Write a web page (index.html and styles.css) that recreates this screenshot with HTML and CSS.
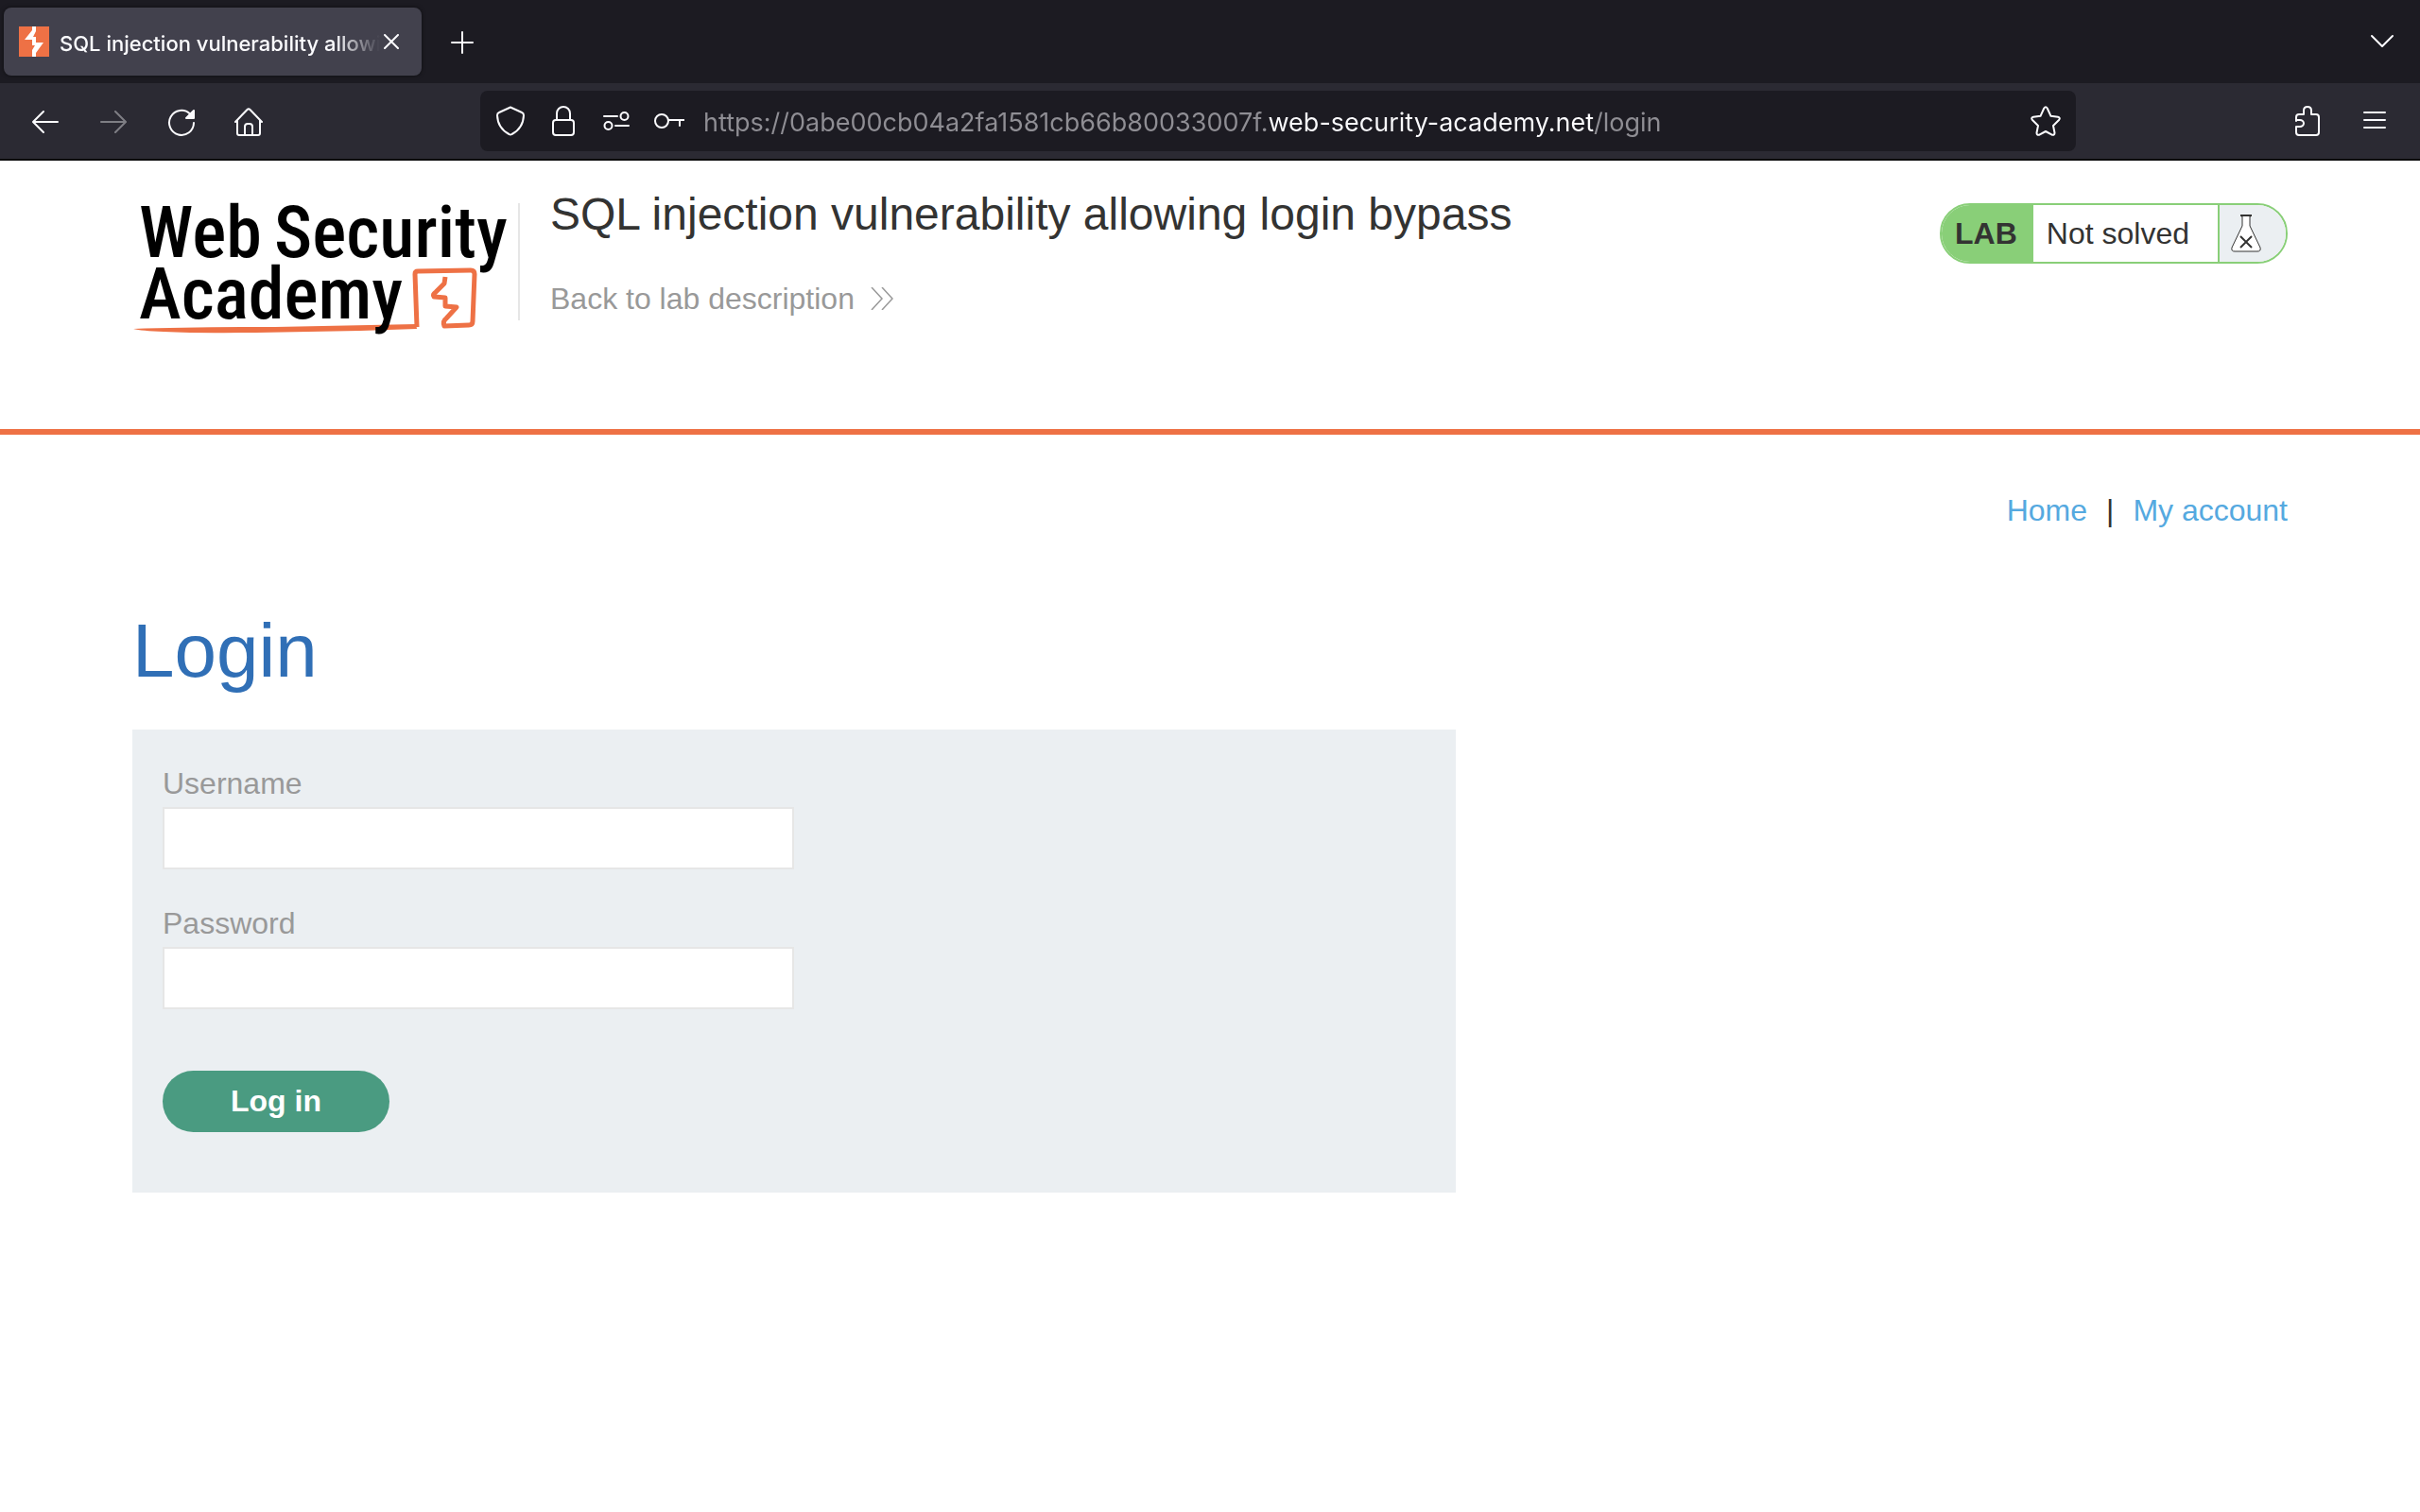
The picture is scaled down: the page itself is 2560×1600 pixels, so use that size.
FILE: index.html
```html
<!DOCTYPE html>
<html lang="en">
<head>
<meta charset="utf-8">
<meta name="viewport" content="width=device-width, initial-scale=1">
<title>SQL injection vulnerability allowing login bypass</title>
<link rel="stylesheet" href="styles.css">
</head>
<body>
<div class="browser">
  <div class="tab-strip">
    <div class="tab">
      <svg class="favicon" viewBox="0 0 32 32" aria-hidden="true"><path fill="#ee7145" d="M0 0h32v32H0z"/><path fill="#fff" d="M14 0h4v5l-3 6h3v6h8l-8 11v4h-4v-7l3-5h-3v-6H6L14 4z"/></svg>
      <span class="tab-title">SQL injection vulnerability allowing login bypass</span>
      <button class="tab-close" type="button" aria-label="Close tab"><svg class="icon-small" viewBox="0 0 16 16"><path d="M1 1l14 14M15 1L1 15"/></svg></button>
    </div>
    <button class="tool" type="button" aria-label="New tab"><svg class="icon" viewBox="0 0 32 32"><path d="M16 6v22M5 17h22"/></svg></button>
    <button class="tool tab-list" type="button" aria-label="List all tabs"><svg class="icon" viewBox="0 0 32 32"><path d="M5 10l11 11 11-11"/></svg></button>
  </div>
  <div class="toolbar">
    <div class="tools">
      <button class="tool" type="button" aria-label="Back"><svg class="icon" viewBox="0 0 32 32"><path d="M29 17H4M14 6L3 17l11 11"/></svg></button>
      <button class="tool" type="button" aria-label="Forward" disabled><svg class="icon" viewBox="0 0 32 32"><path d="M3 17h25M18 6l11 11-11 11"/></svg></button>
      <button class="tool" type="button" aria-label="Reload"><svg class="icon" viewBox="0 0 32 32"><path d="M25 8.500a13 13 0 1 0 4 9.500"/><path class="solid" d="M29 5v8h-8z"/></svg></button>
      <button class="tool" type="button" aria-label="Home"><svg class="icon" viewBox="0 0 32 32"><path d="M1 17L13.500 4q1.500-1.500 3 0L29 17M3 15v14q0 2 2 2h20q2 0 2-2V15M11 31v-9q0-3 3-3h2q3 0 3 3v9"/></svg></button>
    </div>
    <div class="address">
      <svg class="icon" viewBox="0 0 32 32" aria-hidden="true"><path d="M16 1.500L28 7q2 .800 2 3c-.300 9-5 16-12.500 20q-1.500.900-3 0C7 26 2.300 19 2 10q0-2.200 2-3z"/></svg>
      <svg class="icon" viewBox="0 0 32 32" aria-hidden="true"><rect x="5" y="15" width="22" height="16" rx="3"/><path d="M9 15V8a7 7 0 0 1 14 0v7"/></svg>
      <svg class="icon" viewBox="0 0 32 32" aria-hidden="true"><path d="M3 11h14M15 21h14"/><circle cx="24.500" cy="11" r="4"/><circle cx="7.500" cy="21" r="4"/></svg>
      <svg class="icon" viewBox="0 0 32 32" aria-hidden="true"><circle cx="8" cy="16" r="7"/><path d="M15 15h17M27 15v6"/></svg>
      <input class="address-input" type="text" aria-label="Address" value="https://0abe00cb04a2fa1581cb66b80033007f.web-security-academy.net/login">
      <button class="bookmark" type="button" aria-label="Bookmark this page"><svg class="icon" viewBox="0 0 32 32"><path d="M14.300 2.500q1.700-2.500 3.400 0l3.800 8.300 7.500 1q3 .800 1 3.200l-6 6 1.500 7.500q0 3-2.800 2.200L16 27l-6.700 3.700q-2.800.800-2.800-2.200L8 21l-6-6q-2-2.400 1-3.200l7.500-1z"/></svg></button>
    </div>
    <div class="tools">
      <button class="tool" type="button" aria-label="Extensions"><svg class="icon" viewBox="0 0 32 32"><path d="M5 16v-4q0-3 3-3h5V5q0-4 4-4t4 4v4h5q3 0 3 3v16q0 3-3 3H8q-3 0-3-3v-6h4a4 3.500 0 0 0 0-7H5"/></svg></button>
      <button class="tool" type="button" aria-label="Menu"><svg class="icon" viewBox="0 0 32 32"><path d="M5 7h22M5 15h22M5 23h22"/></svg></button>
    </div>
  </div>
</div>

<header class="lab-header">
  <a class="logo" href="#" aria-label="Web Security Academy">
    <svg class="logo-art" viewBox="0 0 400 144">
      <path fill="none" stroke="#ee7145" stroke-width="5" stroke-linejoin="round" d="M301 132l-2-56q0-3 3-3l56-1q4 0 4 4l-2 50q0 4-4 4l-26 1q-2-5 2-8l11-12-12-1v-9l-12-1q-2-2 2-5l9-9 1-7"/>
      <path fill="#ee7145" d="M1 134q60-2 150-2l149-3 1 5-60 2-110 2q-110 1-130-4z"/>
      <text class="logo-word" x="7" y="58">Web</text>
      <text class="logo-word" x="150" y="58">Security</text>
      <text class="logo-word" x="7" y="123">Academy</text>
    </svg>
  </a>
  <div class="title-block">
    <h2 class="lab-title">SQL injection vulnerability allowing login bypass</h2>
    <a class="back-link" href="#">Back to lab description
      <svg class="chevrons" viewBox="0 0 24 24" aria-hidden="true"><path d="M1 0l11 12L1 24M12 0l11 12-11 12"/></svg>
    </a>
  </div>
  <div class="status">
    <strong class="status-tag">LAB</strong>
    <span class="status-text">Not solved</span>
    <span class="status-icon"><svg class="flask" viewBox="0 0 32 40" aria-hidden="true"><path fill="#fff" d="M11 1h10v1h-1v10l11 23q1 4-3 4H4q-4 0-3-4l11-23V2h-1z"/><path stroke-width="2" d="M10 23l12 12M22 23L10 35M10 1h12"/></svg></span>
  </div>
</header>

<main class="page">
  <nav class="links">
    <a href="#">Home</a>
    <span>|</span>
    <a href="#">My account</a>
  </nav>
  <h1 class="heading">Login</h1>
  <form class="login">
    <div class="field">
      <label for="username">Username</label>
      <input id="username" name="username" type="text">
    </div>
    <div class="field">
      <label for="password">Password</label>
      <input id="password" name="password" type="password">
    </div>
    <button class="submit" type="submit">Log in</button>
  </form>
</main>
</body>
</html>
```
FILE: styles.css
```css
* {
  box-sizing: border-box;
}

body {
  margin: 0;
  background: #fff;
  color: #333332;
  font-family: "Liberation Sans", Arial, sans-serif;
  font-size: 32px;
  line-height: 40px;
}

button {
  padding: 0;
  border: 0;
  background: none;
  color: inherit;
  font: inherit;
}

a {
  text-decoration: none;
}

/* Browser window */
.browser {
  border-bottom: 2px solid #0c0c0d;
  background: #2b2a33;
  color: #fbfbfe;
  font-family: Inter, sans-serif;
}

.tab-strip {
  display: flex;
  align-items: center;
  height: 88px;
  padding: 0 8px 0 4px;
  background: #1c1b22;
}

.tab {
  display: flex;
  align-items: center;
  width: 442px;
  height: 72px;
  margin-right: 11px;
  padding: 0 16px;
  border-radius: 8px;
  background: #42414d;
  box-shadow: 0 0 4px #0008;
}

.favicon {
  flex: none;
  width: 32px;
  height: 32px;
}

.tab-title {
  flex: 1;
  margin-left: 11px;
  padding-top: 3px;
  overflow: hidden;
  font-size: 22px;
  font-weight: 500;
  white-space: nowrap;
  -webkit-mask-image: linear-gradient(to left, transparent, #000 48px);
  mask-image: linear-gradient(to left, transparent, #000 48px);
}

.tab-close {
  display: flex;
  margin: 0 8px 0 4px;
}

.icon-small {
  width: 16px;
  height: 16px;
}

.icon {
  flex: none;
  width: 32px;
  height: 32px;
}

.icon,
.icon-small {
  fill: none;
  stroke: currentColor;
  stroke-width: 2;
  stroke-linecap: round;
  stroke-linejoin: round;
}

.icon .solid {
  fill: currentColor;
}

.tool {
  display: flex;
  align-items: center;
  justify-content: center;
  width: 64px;
  height: 64px;
}

.tool:disabled {
  opacity: 0.4;
}

.tab-list {
  margin-left: auto;
}

.toolbar {
  display: flex;
  padding: 8px 16px;
}

.tools {
  display: flex;
  gap: 8px;
}

.address {
  display: flex;
  flex: 1;
  align-items: center;
  gap: 24px;
  height: 64px;
  margin: 0 212px;
  padding: 0 16px;
  border-radius: 8px;
  background: #1c1b22;
}

.address-input {
  flex: 1;
  min-width: 0;
  height: 42px;
  margin-left: -4px;
  padding: 2px 0 0;
  border: 0;
  outline: 0;
  background: linear-gradient(to right, #8f8e94 597px, #fbfbfe 597px 942px, #8f8e94 942px);
  -webkit-background-clip: text;
  background-clip: text;
  color: transparent;
  font-family: Inter, sans-serif;
  font-size: 27px;
}

.bookmark {
  display: flex;
}

/* Lab banner */
.lab-header {
  display: flex;
  align-items: flex-start;
  padding: 29px 140px 96px;
  border-bottom: 6px solid #ee7145;
}

.logo {
  display: flex;
  flex: none;
  margin-top: 15px;
}

.logo-art {
  width: 400px;
  height: 144px;
  overflow: visible;
}

.logo-word {
  fill: #000;
  font-family: "Roboto Condensed", "Liberation Sans Narrow", Roboto, sans-serif;
  font-size: 76px;
  font-weight: 500;
}

.title-block {
  display: flex;
  flex: 1;
  flex-direction: column;
  gap: 41px;
  min-height: 140px;
  margin-left: 8px;
  padding-left: 34px;
  background: linear-gradient(#e6e6e6, #e6e6e6) 0 16px / 2px 124px no-repeat;
}

.lab-title {
  margin: 0;
  font-size: 48px;
  font-weight: 400;
  line-height: 56px;
}

.back-link {
  display: flex;
  align-items: center;
  gap: 17px;
  color: #999;
}

.chevrons {
  width: 24px;
  height: 24px;
  fill: none;
  stroke: currentColor;
  stroke-width: 1.5;
}

.status {
  display: flex;
  height: 64px;
  margin-top: 16px;
  overflow: hidden;
  border: 2px solid #89cf78;
  border-radius: 32px;
  line-height: 60px;
}

.status-tag {
  padding: 0 17px 0 14px;
  background: #89cf78;
}

.status-text {
  padding: 0 30px 0 14px;
}

.status-icon {
  display: flex;
  align-items: center;
  padding: 0 26px 0 12px;
  border-left: 2px solid #89cf78;
  background: #ebeff2;
}

.flask {
  width: 32px;
  height: 40px;
  fill: none;
  stroke: #333332;
  stroke-width: 1;
}

/* Login page */
.page {
  padding: 60px 140px;
}

.links {
  display: flex;
  justify-content: flex-end;
  gap: 20px;
  margin-bottom: 81px;
}

.links a {
  color: #55a9e0;
}

.heading {
  margin: 0 0 35px;
  color: #306fb6;
  font-size: 80px;
  font-weight: 400;
  line-height: 96px;
}

.login {
  display: flex;
  flex-direction: column;
  align-items: flex-start;
  gap: 37px;
  max-width: 1400px;
  padding: 37px 32px 64px;
  background: #ebeff2;
}

.field {
  display: flex;
  flex-direction: column;
  gap: 5px;
  width: 50%;
  color: #999;
}

.field input {
  height: 66px;
  padding: 0 16px;
  border: 2px solid #e6e6e6;
  background: #fff;
  font: inherit;
}

.submit {
  width: 240px;
  height: 65px;
  margin-top: 28px;
  padding-bottom: 1px;
  border-radius: 33px;
  background: #4a9b81;
  color: #fff;
  font-weight: 700;
}
```
